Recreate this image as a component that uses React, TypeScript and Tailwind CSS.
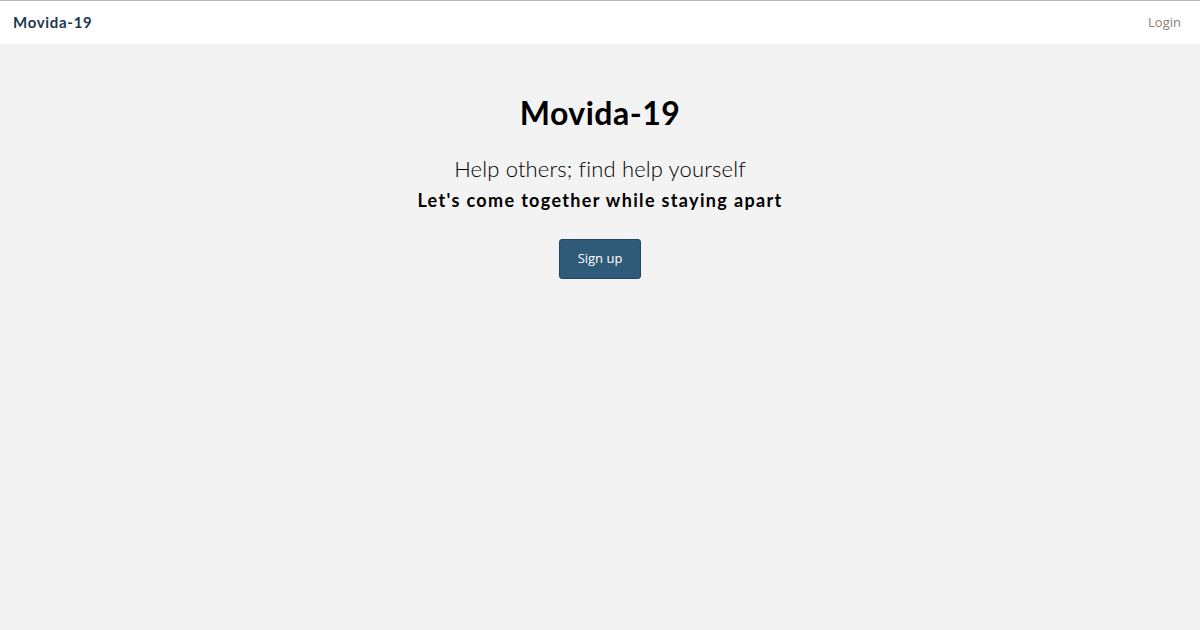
export default function App() {
  return (
    <div className="min-h-[630px] bg-[#f3f3f3] flex flex-col font-['Lato',sans-serif]">
      <header className="h-[44px] bg-white border-t border-[#b5b5b5] flex items-center justify-between px-[13px]">
        <span className="text-[15px] font-bold text-[#1d3850] tracking-[0.7px]">Movida-19</span>
        <span className="text-[13px] text-[#8a7f7a] font-['Open_Sans',sans-serif] mr-[6px]">Login</span>
      </header>
      <main className="flex flex-col items-center pt-[49px]">
        <h1 className="text-[32px] leading-[40px] font-bold text-black tracking-[0.5px]">Movida-19</h1>
        <p className="mt-[22px] text-[22px] leading-[28px] font-light text-black tracking-[0.15px]">
          Help others; find help yourself
        </p>
        <p className="mt-[5px] text-[18px] leading-[24px] font-bold text-black tracking-[1.35px]">
          Let's come together while staying apart
        </p>
        <button className="mt-[27px] w-[82px] h-[40px] rounded-[3px] bg-[#2f5a78] border border-[#24475f] text-white text-[13px] font-['Open_Sans',sans-serif]">
          Sign up
        </button>
      </main>
    </div>
  );
}
